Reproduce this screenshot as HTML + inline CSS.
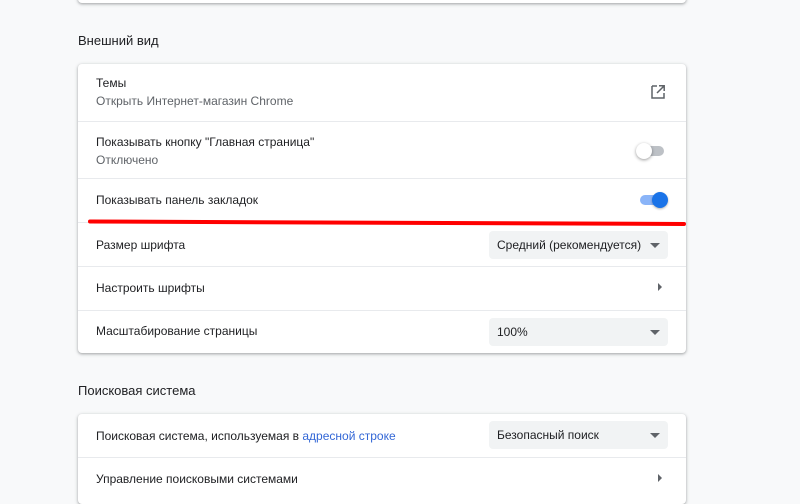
<!DOCTYPE html>
<html><head><meta charset="utf-8"><style>
body{margin:0;width:800px;height:490px;overflow:hidden;background:#f8f9fa;font-family:"Liberation Sans",sans-serif;font-size:12px;color:#202124;position:relative}
.card{position:absolute;left:78px;width:608px;background:#fff;border-radius:4px;box-shadow:0 1px 2px rgba(60,64,67,.3),0 1px 3px 1px rgba(60,64,67,.15)}
.row{position:absolute;left:0;right:0;border-top:1px solid #e8eaed}
.row:first-child{border-top:none}
.t{position:absolute;left:18px}
.s{color:#5f6368}
.h{position:absolute;left:78px;font-size:13px;color:#202124}
.sel{position:absolute;left:411px;width:179px;height:28px;background:#f1f3f4;border-radius:4px}
.sel span{position:absolute;left:8px;top:7px}
.sel i{position:absolute;right:8px;top:12px;border-left:5px solid transparent;border-right:5px solid transparent;border-top:5px solid #5f6368}
.arr{position:absolute;right:24px;border-top:4px solid transparent;border-bottom:4px solid transparent;border-left:4px solid #5f6368}
</style></head><body>
<div class="card" style="top:-20px;height:23px"></div>
<div class="h" style="top:33px">Внешний вид</div>
<div class="card" style="top:64px;height:289px">
 <div class="row" style="top:0;height:57px"><div class="t" style="top:12px">Темы</div><div class="t s" style="top:30px">Открыть Интернет-магазин Chrome</div>
  <svg style="position:absolute;left:572px;top:20px" width="16" height="16" viewBox="0 0 16 16"><path d="M2 2h5M2 2v12h12v-5" fill="none" stroke="#5f6368" stroke-width="1.5"/><path d="M9 1.8h5.2V7M14 2L7 9" fill="none" stroke="#5f6368" stroke-width="1.5"/></svg></div>
 <div class="row" style="top:57px;height:57px"><div class="t" style="top:13px">Показывать кнопку "Главная страница"</div><div class="t s" style="top:31px">Отключено</div>
  <div style="position:absolute;left:562px;top:24px;width:24px;height:10px;border-radius:5px;background:#bdc1c6"></div><div style="position:absolute;left:558px;top:21px;width:16px;height:16px;border-radius:50%;background:#fff;box-shadow:0 1px 3px rgba(0,0,0,.4)"></div></div>
 <div class="row" style="top:114px;height:44px"><div class="t" style="top:14px">Показывать панель закладок</div>
  <div style="position:absolute;left:562px;top:16px;width:24px;height:10px;border-radius:5px;background:#8ab4f8"></div><div style="position:absolute;left:574px;top:13px;width:16px;height:16px;border-radius:50%;background:#1a73e8;box-shadow:0 1px 2px rgba(0,0,0,.3)"></div></div>
 <div class="row" style="top:158px;height:44px"><div class="t" style="top:15px">Размер шрифта</div><div class="sel" style="top:8px"><span>Средний (рекомендуется)</span><i></i></div></div>
 <div class="row" style="top:202px;height:44px"><div class="t" style="top:14px">Настроить шрифты</div><div class="arr" style="top:16px"></div></div>
 <div class="row" style="top:246px;height:43px"><div class="t" style="top:13px">Масштабирование страницы</div><div class="sel" style="top:7px"><span>100%</span><i></i></div></div>
</div>
<svg style="position:absolute;left:0;top:0" width="800" height="490"><path d="M90 221.5L684 224" stroke="#f00" stroke-width="4" stroke-linecap="round"/></svg>
<div class="h" style="top:383px">Поисковая система</div>
<div class="card" style="top:414px;height:90px">
 <div class="row" style="top:0;height:43px"><div class="t" style="top:15px">Поисковая система, используемая в <span style="color:#3367d6">адресной строке</span></div><div class="sel" style="top:7px"><span>Безопасный поиск</span><i></i></div></div>
 <div class="row" style="top:43px;height:44px"><div class="t" style="top:14px">Управление поисковыми системами</div><div class="arr" style="top:16px"></div></div>
</div>
</body></html>
